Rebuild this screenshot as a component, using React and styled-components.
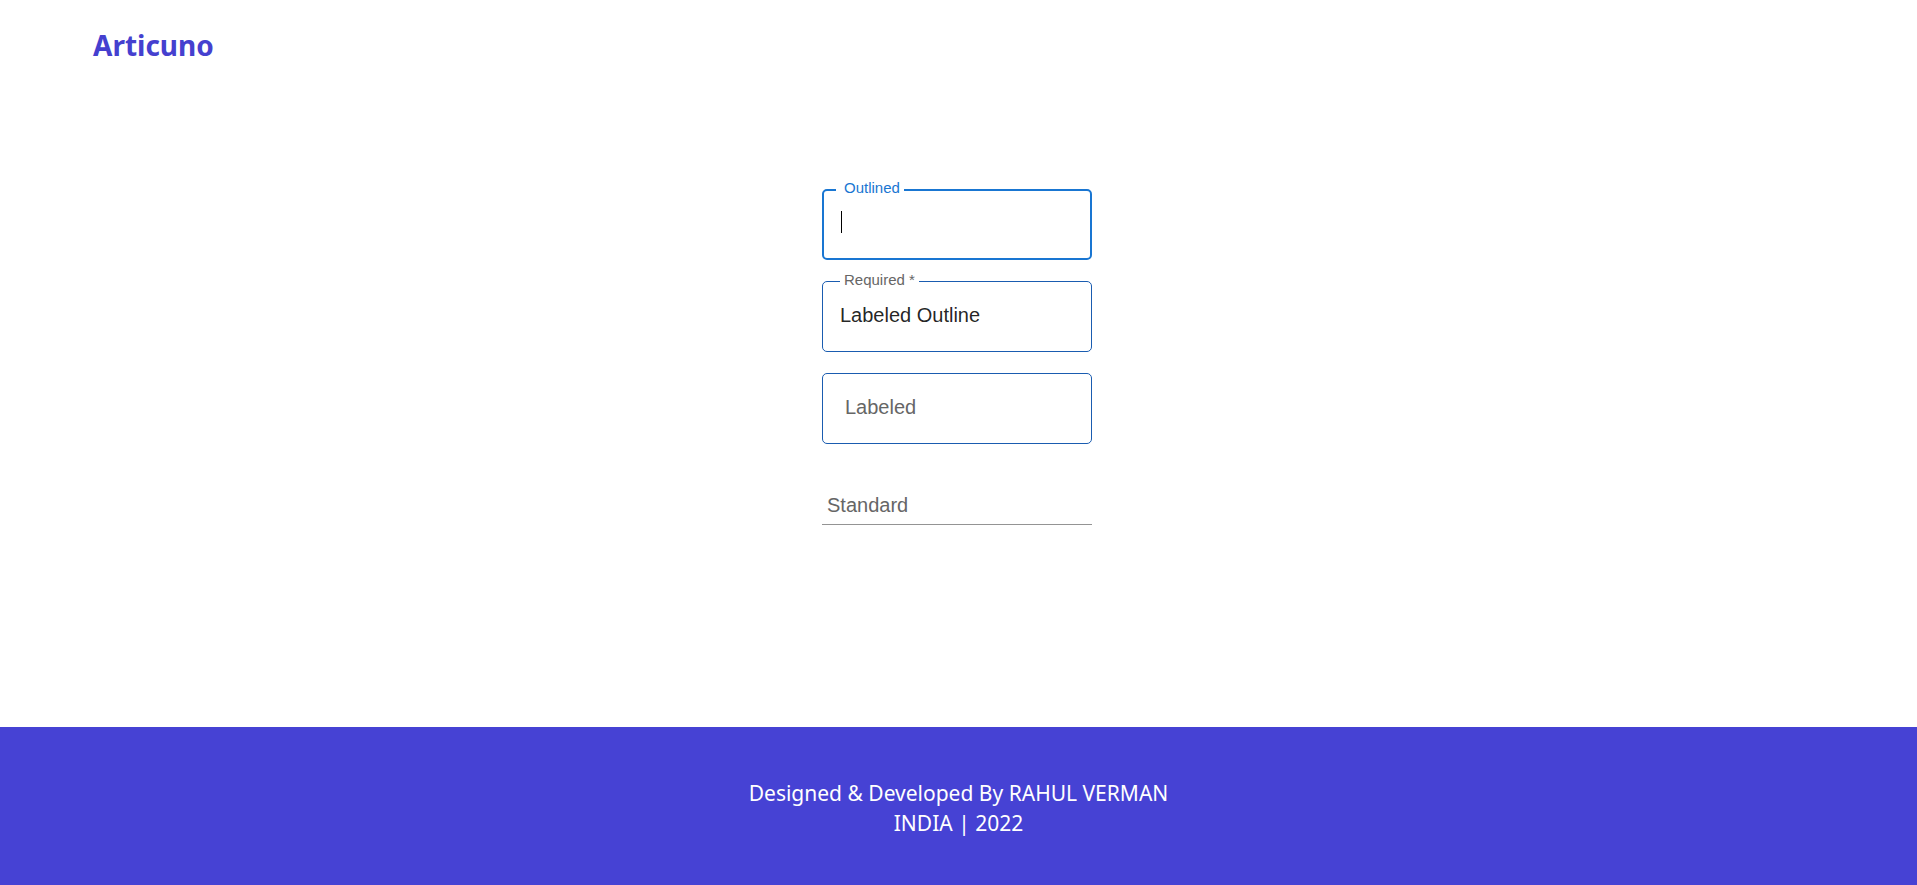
import React from "react";
import styled, { createGlobalStyle } from "styled-components";

const GlobalStyle = createGlobalStyle`
  html, body {
    margin: 0;
    padding: 0;
    background: #ffffff;
  }
  body {
    font-family: "Noto Sans", "Open Sans", sans-serif;
  }
  * {
    box-sizing: border-box;
  }
`;

const Page = styled.div`
  min-height: 100vh;
  display: flex;
  flex-direction: column;
`;

const Header = styled.header`
  padding: 27px 0 0 93px;
  height: 63px;
`;

const Logo = styled.div`
  font-family: "Noto Sans", sans-serif;
  font-weight: 700;
  font-size: 28px;
  line-height: 36px;
  color: #4540cf;
`;

const Main = styled.main`
  flex: 1;
  display: flex;
  flex-direction: column;
  align-items: center;
  padding: 126px 3px 0 0;
`;

const Form = styled.form`
  width: 270px;
  display: flex;
  flex-direction: column;
  gap: 21px;
  font-family: "Liberation Sans", Arial, sans-serif;
`;

const Outlined = styled.fieldset`
  margin: ${(p) => (p.$hasLegend ? "-9px 0 0" : "0")};
  padding: 0;
  min-width: 0;
  border: ${(p) => (p.$focused ? "2px solid #1976d2" : "1px solid #1a5cb0")};
  border-radius: 5px;
`;

const Legend = styled.legend`
  margin-left: ${(p) => p.$offset}px;
  padding: 0 4px 3px ${(p) => p.$lead}px;
  font-size: 15px;
  line-height: 16px;
  color: ${(p) => (p.$focused ? "#1976d2" : "#666666")};
`;

const InputRow = styled.div`
  display: flex;
  align-items: center;
  height: ${(p) => p.$height}px;
  padding: 0 14px ${(p) => p.$pb}px ${(p) => p.$pl}px;
`;

const Caret = styled.span`
  flex: none;
  width: 1px;
  height: 22px;
  background: #000000;
`;

const Input = styled.input`
  flex: 1;
  min-width: 0;
  border: 0;
  outline: none;
  padding: 0;
  margin: 0;
  background: transparent;
  font-family: "Liberation Sans", Arial, sans-serif;
  font-size: 20px;
  line-height: 23px;
  height: 23px;
  color: rgba(0, 0, 0, 0.87);

  &::placeholder {
    color: #666666;
    opacity: 1;
  }
`;

const Standard = styled.div`
  height: 60px;
  display: flex;
  align-items: flex-end;
  border-bottom: 1px solid #949494;
  padding: 0 0 7px 5px;
`;

const Footer = styled.footer`
  height: 158px;
  padding-top: 4px;
  background: #4642d4;
  color: #ffffff;
  display: flex;
  flex-direction: column;
  align-items: center;
  justify-content: center;
  font-family: "Noto Sans", "Open Sans", sans-serif;
  font-size: 21px;
  line-height: 30px;
`;

const FooterLine = styled.div`
  white-space: nowrap;
`;

export default function App() {
  return (
    <>
      <GlobalStyle />
      <Page>
        <Header>
          <Logo>Articuno</Logo>
        </Header>
        <Main>
          <Form onSubmit={(e) => e.preventDefault()}>
            <Outlined $hasLegend $focused>
              <Legend $focused $offset={12} $lead={8}>
                Outlined
              </Legend>
              <InputRow $height={59} $pb={13} $pl={17}>
                <Caret />
                <Input type="text" aria-label="Outlined" />
              </InputRow>
            </Outlined>

            <Outlined $hasLegend>
              <Legend $offset={17} $lead={4}>
                Required *
              </Legend>
              <InputRow $height={60} $pb={11} $pl={17}>
                <Input type="text" defaultValue="Labeled Outline" aria-label="Required" />
              </InputRow>
            </Outlined>

            <Outlined>
              <InputRow $height={69} $pb={2} $pl={22}>
                <Input type="text" placeholder="Labeled" aria-label="Labeled" />
              </InputRow>
            </Outlined>

            <Standard>
              <Input type="text" placeholder="Standard" aria-label="Standard" />
            </Standard>
          </Form>
        </Main>
        <Footer>
          <FooterLine>Designed &amp; Developed By RAHUL VERMAN</FooterLine>
          <FooterLine>INDIA | 2022</FooterLine>
        </Footer>
      </Page>
    </>
  );
}
